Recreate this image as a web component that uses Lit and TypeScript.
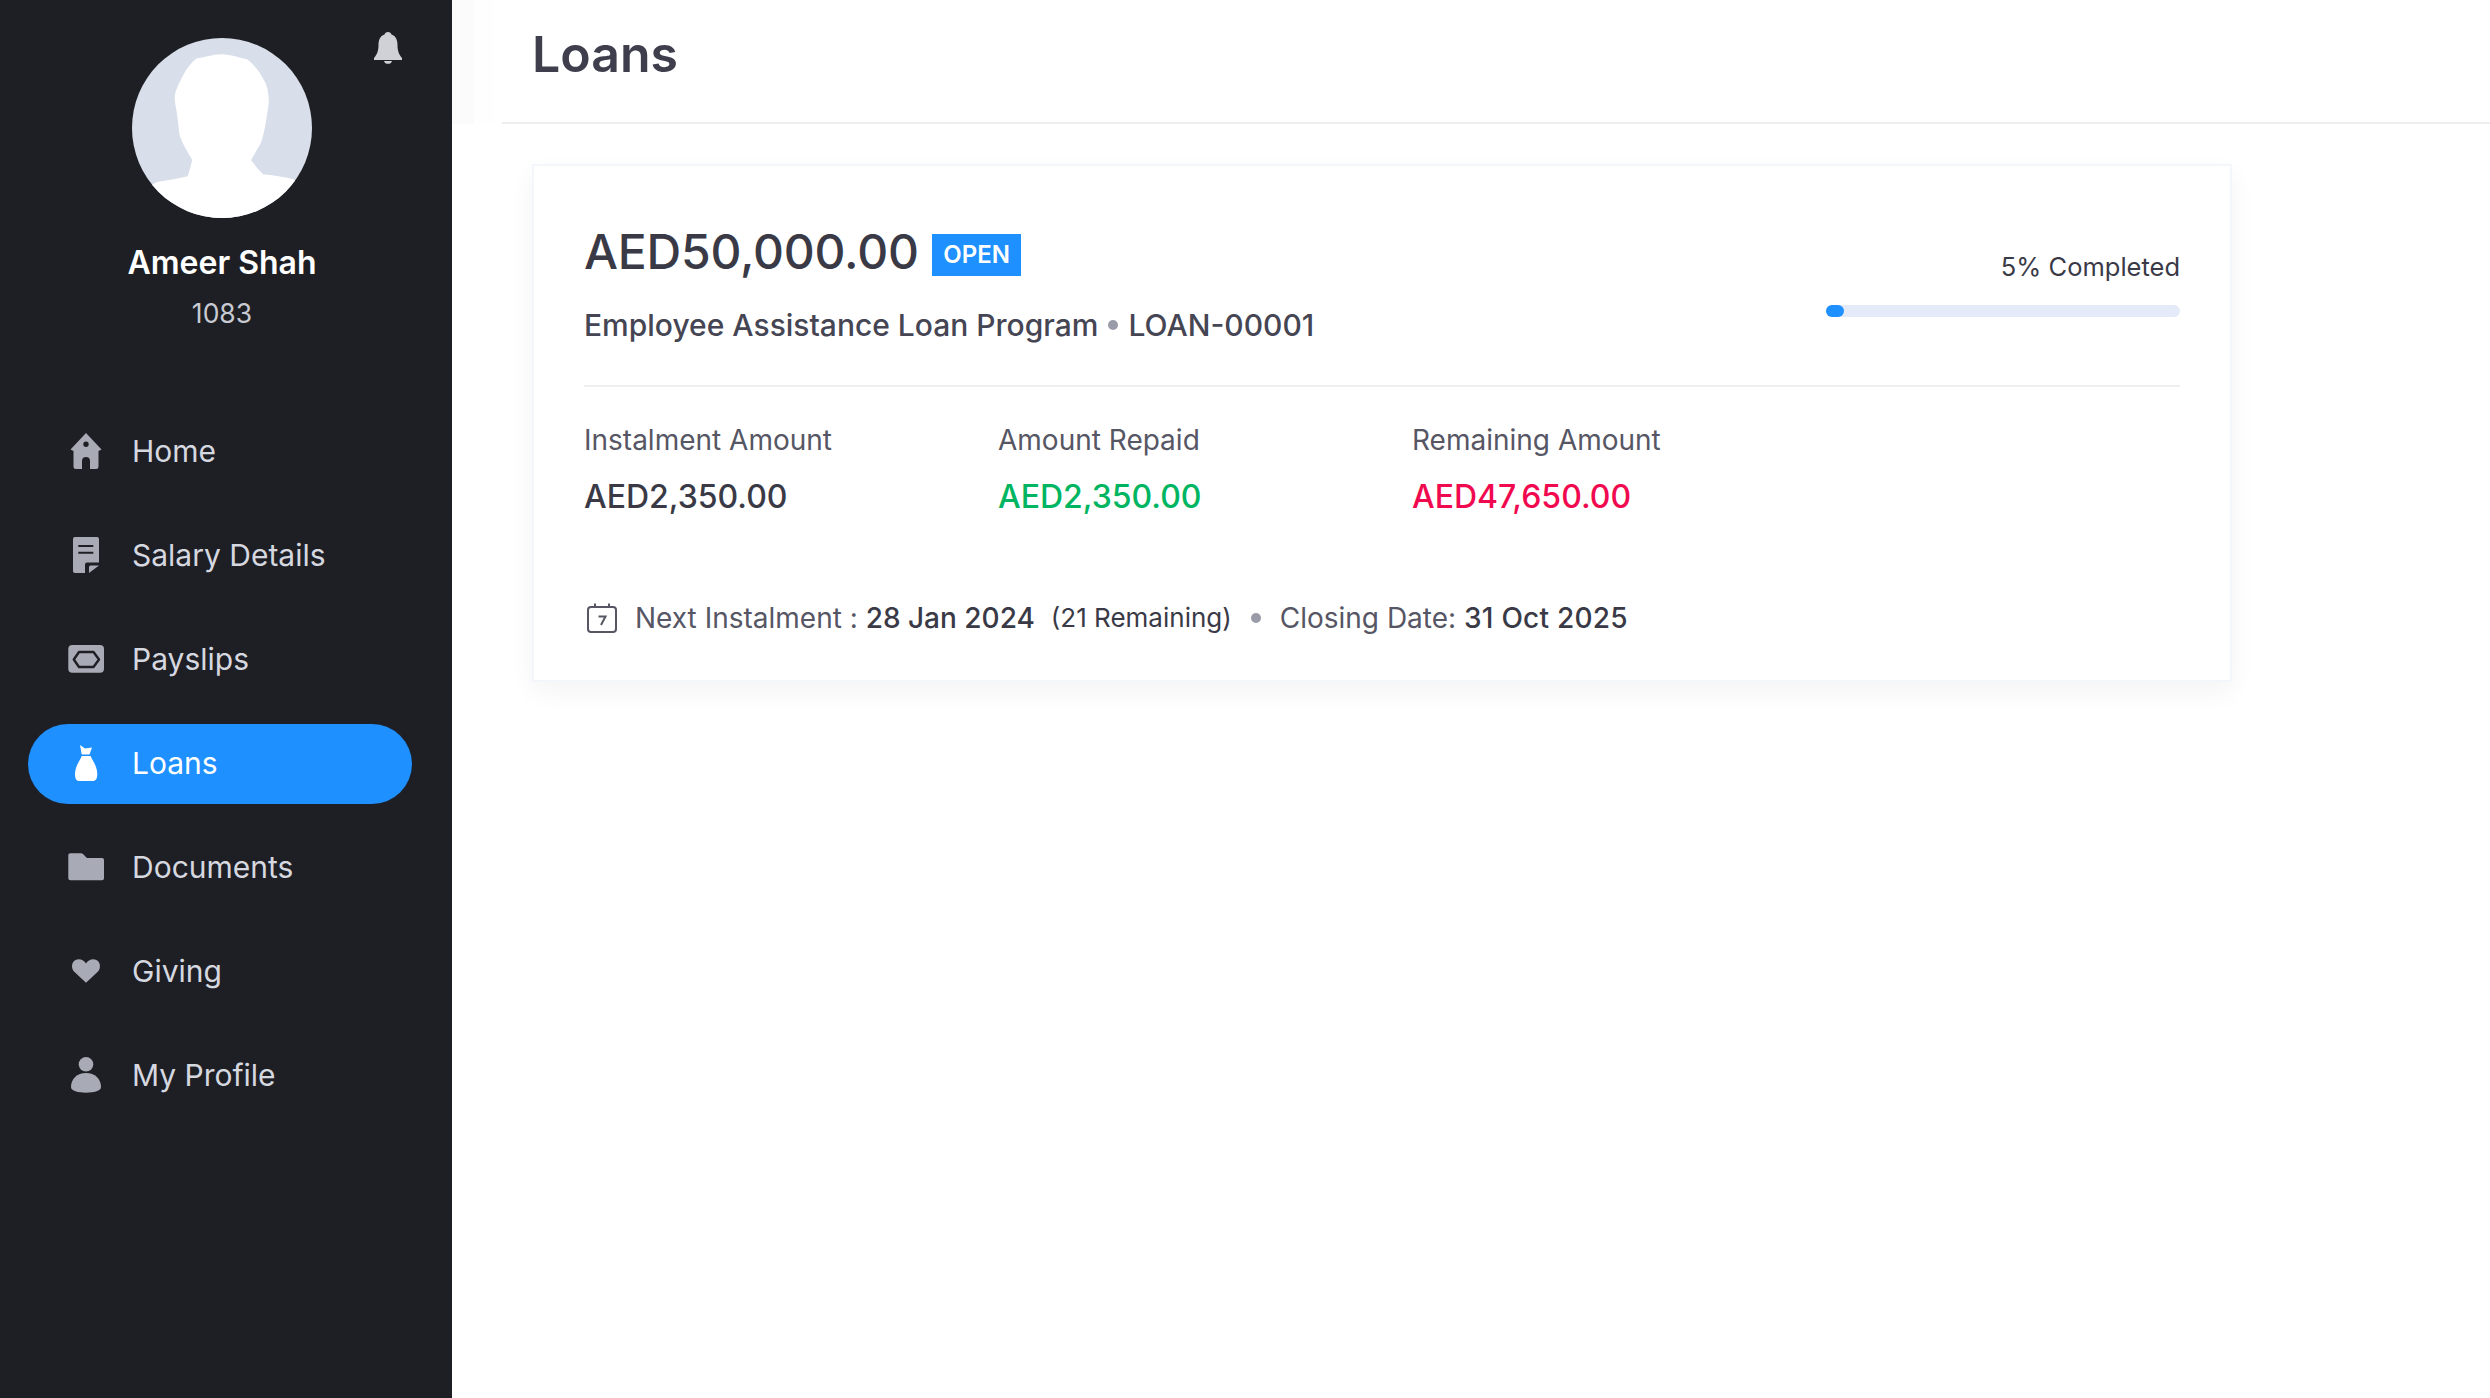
import { LitElement, html, css, svg } from "lit";
import { customElement } from "lit/decorators.js";

const icons: Record<string, unknown> = {
  home: svg`<path fill-rule="evenodd" d="M20 1 35.500 17.500 32.500 19V34.500Q32.500 37 30 37H24V29A4 4 0 0 0 16 29V37H10Q7.500 37 7.500 34.500V19L4.500 17.500ZM20 9.600A2.700 2.700 0 1 0 20 15A2.700 2.700 0 1 0 20 9.600Z"/>`,
  doc: svg`<path fill-rule="evenodd" d="M9 1H31A2 2 0 0 1 33 3V26.500H21A2 2 0 0 0 19 28.500V37H9A2 2 0 0 1 7 35V3A2 2 0 0 1 9 1ZM12.300 9V11H27.300V9ZM12.300 15.700V17.700H27.300V15.700Z"/><path d="M23 37V31A1.500 1.500 0 0 1 24.500 29.500H33Z"/>`,
  pay: svg`<rect x="2.300" y="5" width="35.700" height="27.700" rx="4"/><path d="M13 12H27.500L33 19.500 27.500 27H13L7.800 19.500Z" fill="none" stroke="#1e1f24" stroke-width="2.400" stroke-linejoin="round"/>`,
  bag: svg`<path d="M14 1 19 4.500 26 3.500 23.500 10.500H15.700ZM15.700 12H24.700C26.500 17 31.300 22 31.300 30 31.300 35 29.500 37 27 37H13C10.500 37 9 35 9 30 9 22 14 17 15.700 12Z"/>`,
  folder: svg`<path d="M4.300 5.300H15A3 3 0 0 1 17.200 6.200L21 10H36A2 2 0 0 1 38 12V30.300A2 2 0 0 1 36 32.300H4.300A2 2 0 0 1 2.300 30.300V7.300A2 2 0 0 1 4.300 5.300Z"/>`,
  heart: svg`<path d="M20 30.700 8 19.500C4.500 16 5.500 7.300 12.500 7.300 16 7.300 18.500 9 20 11.500 21.500 9 24 7.300 27.500 7.300 34.500 7.300 35.500 16 32 19.500Z"/>`,
  user: svg`<circle cx="20" cy="8.300" r="7.300"/><path d="M20 17C11 17 5 23 5 31 5 35 12 36.700 20 36.700S35 35 35 31C35 23 29 17 20 17Z"/>`,
};

const nav = [
  ["Home", "home"],
  ["Salary Details", "doc"],
  ["Payslips", "pay"],
  ["Loans", "bag"],
  ["Documents", "folder"],
  ["Giving", "heart"],
  ["My Profile", "user"],
];

@customElement("app-root")
export class AppRoot extends LitElement {
  static styles = css`
    :host {
      display: flex;
      width: 2490px;
      height: 1398px;
      background: #fff;
      font-family: Inter, "Liberation Sans", sans-serif;
      color: #3a3a47;
      overflow: hidden;
    }
    .side {
      position: relative;
      width: 452px;
      flex: none;
      background: #1e1f24;
      box-sizing: border-box;
      padding-top: 38px;
    }
    .bell {
      position: absolute;
      left: 372px;
      top: 30px;
      width: 32px;
      height: 36px;
      fill: #d0d1d6;
    }
    .profile {
      display: flex;
      flex-direction: column;
      align-items: center;
      width: 444px;
    }
    .avatar {
      width: 180px;
      height: 180px;
      display: block;
    }
    .name {
      margin-top: 24.500px;
      font-size: 32px;
      line-height: 40px;
      font-weight: 600;
      color: #fff;
    }
    .id {
      margin-top: 12px;
      font-size: 26.500px;
      line-height: 36px;
      color: #c8cad2;
    }
    nav {
      margin-top: 81.500px;
      padding: 0 40px 0 28px;
      display: flex;
      flex-direction: column;
      gap: 24px;
    }
    .item {
      height: 80px;
      border-radius: 40px;
      display: flex;
      align-items: center;
      gap: 26px;
      padding-left: 38px;
      font-size: 30px;
      line-height: 78px;
      color: #d6d8e0;
    }
    .item span {
      height: 80px;
    }
    .item svg {
      width: 40px;
      height: 40px;
      flex: none;
      fill: #a8abb5;
    }
    .item.on {
      background: #1e90ff;
      color: #fff;
    }
    .item.on svg {
      fill: #fff;
    }
    main {
      flex: 1;
      min-width: 0;
    }
    .band {
      padding-left: 50px;
      background: linear-gradient(90deg, #fbfbfb 0 22px, #fefefe 22px 42px, #fff 42px);
    }
    header {
      height: 124px;
      box-sizing: border-box;
      border-bottom: 2px solid #eeeef0;
      padding: 22px 0 0 30px;
      font-size: 50px;
      line-height: 64px;
      font-weight: 600;
      color: #3e3e4c;
    }
    .card {
      margin: 40px 0 0 80px;
      width: 1700px;
      height: 518px;
      box-sizing: border-box;
      padding: 54px 50px 0;
      background: #fff;
      border: 2px solid #f3f6fb;
      box-shadow: 0 10px 24px rgba(30, 40, 70, 0.05);
    }
    .top {
      display: flex;
      justify-content: space-between;
      height: 165px;
      border-bottom: 2px solid #efeff2;
    }
    .line1 {
      display: flex;
      align-items: center;
      gap: 13px;
      height: 64px;
    }
    .amount {
      font-size: 48px;
      line-height: 64px;
      font-weight: 500;
      letter-spacing: -0.2px;
    }
    .badge {
      margin-top: 6px;
      background: #1e90ff;
      color: #fff;
      font-size: 24px;
      font-weight: 600;
      line-height: 42px;
      padding: 0 11.500px;
    }
    .line2 {
      margin-top: 21px;
      font-size: 30px;
      line-height: 40px;
      font-weight: 500;
      display: flex;
      align-items: center;
      color: #454553;
    }
    .dot {
      width: 10px;
      height: 10px;
      border-radius: 50%;
      background: #9a9ba8;
      margin: 0 10px;
      flex: none;
    }
    .progress {
      width: 354px;
      margin-top: 29px;
      text-align: right;
      font-size: 25.500px;
      line-height: 36px;
    }
    .track {
      margin-top: 20px;
      height: 12px;
      border-radius: 6px;
      background: #e4eaf7;
    }
    .fill {
      height: 100%;
      border-radius: 6px;
      background: #1e90ff;
    }
    .stats {
      display: grid;
      grid-template-columns: repeat(3, 414px);
      padding-top: 33px;
    }
    .label {
      font-size: 28px;
      line-height: 40px;
      color: #565664;
    }
    .value {
      margin-top: 16px;
      font-size: 32px;
      line-height: 42px;
      font-weight: 500;
    }
    .green {
      color: #00b561;
    }
    .red {
      color: #f0094f;
    }
    .foot {
      margin-top: 80px;
      display: flex;
      align-items: center;
      font-size: 28px;
      line-height: 40px;
      color: #565664;
      white-space: pre;
    }
    .cal {
      width: 32px;
      height: 32px;
      margin: 0 17px 0 2px;
      flex: none;
    }
    .foot b {
      font-weight: 500;
      color: #3a3a47;
    }
    .small {
      font-size: 26px;
      color: #3a3a47;
      margin-left: 16px;
    }
    .foot .dot {
      margin: 0 18.500px 0 19.500px;
    }
    .foot .wide {
      letter-spacing: 0.25px;
    }
  `;

  render() {
    const pct = 5;
    return html`
      <aside class="side">
        <svg class="bell" viewBox="0 0 32 36">
          <path d="M16 2C18 2 19 3 19.500 4.500 24 6 25.500 10 25.500 15 25.500 21 27 24.500 30 28V30H2V28C5 24.500 6.500 21 6.500 15 6.500 10 8 6 12.500 4.500 13 3 14 2 16 2ZM12 31H20C19.500 33 18 33.800 16 33.800S12.500 33 12 31Z"/>
        </svg>
        <div class="profile">
          <svg class="avatar" viewBox="0 0 180 180">
            <defs><clipPath id="c"><circle cx="90" cy="90" r="90"/></clipPath></defs>
            <g clip-path="url(#c)">
              <rect width="180" height="180" fill="#d9dfea"/>
              <path fill="#fff" stroke="#fff" stroke-width="1.500" stroke-linejoin="round" d="M88 17C80 17 72 21 65 21 57 27 52 36 45 52 43 57 43 60 44 66 46 75 47 85 48 95 50 105 56 112 61 122 59 130 58 135 56 139 45 142 33 143 25 145L0 158V180H180V156L161 142C150 139 141 138 131 137 125 132 122 127 118 122 122 116 125 110 128 105 132 95 134 80 136 65 136 55 135 48 131 42 126 32 120 26 115 22 105 20 96 16 88 17Z"/>
            </g>
          </svg>
          <div class="name">Ameer Shah</div>
          <div class="id">1083</div>
        </div>
        <nav>
          ${nav.map(
            ([label, icon]) => html`
              <div class="item ${label === "Loans" ? "on" : ""}">
                <svg viewBox="0 0 40 40">${icons[icon]}</svg>
                <span>${label}</span>
              </div>
            `
          )}
        </nav>
      </aside>
      <main>
        <div class="band"><header>Loans</header></div>
        <section class="card">
          <div class="top">
            <div>
              <div class="line1">
                <span class="amount">AED50,000.00</span>
                <span class="badge">OPEN</span>
              </div>
              <div class="line2">
                <span>Employee Assistance Loan Program</span><i class="dot"></i><span>LOAN-00001</span>
              </div>
            </div>
            <div class="progress">
              <div>5% Completed</div>
              <div class="track"><div class="fill" style="width:${pct}%"></div></div>
            </div>
          </div>
          <div class="stats">
            <div><div class="label">Instalment Amount</div><div class="value">AED2,350.00</div></div>
            <div><div class="label">Amount Repaid</div><div class="value green">AED2,350.00</div></div>
            <div><div class="label">Remaining Amount</div><div class="value red">AED47,650.00</div></div>
          </div>
          <div class="foot">
            <svg class="cal" viewBox="0 0 32 32" fill="none" stroke="#565664" stroke-width="2">
              <rect x="2" y="5" width="28" height="25" rx="3"/>
              <path d="M9 1.500V6M23 1.500V6"/>
              <path d="M12.500 14.500H19.500L15 23"/>
            </svg>
            <span>Next Instalment : </span><b>28 Jan 2024</b><span class="small">(21 Remaining)</span><i class="dot"></i><span>Closing Date: </span><b class="wide">31 Oct 2025</b>
          </div>
        </section>
      </main>
    `;
  }
}
